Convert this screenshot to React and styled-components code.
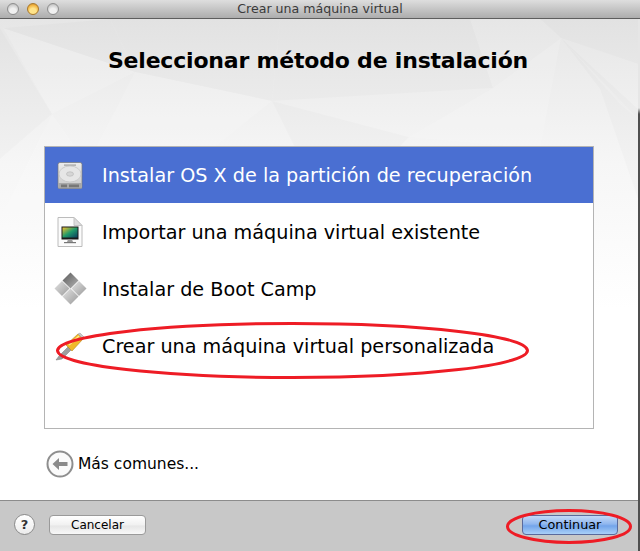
import React from "react";
import styled, { createGlobalStyle } from "styled-components";

const Global = createGlobalStyle`
  html, body { margin: 0; padding: 0; background: #fff; }
  body { font-family: "DejaVu Sans", "Liberation Sans", sans-serif; }
`;

const Frame = styled.div`
  position: relative;
  width: 640px;
  height: 551px;
  overflow: hidden;
  background: linear-gradient(#e6e6e6 0 108px, #4f4f4f 114px);
  padding-right: 2px;
  box-sizing: border-box;
  display: flex;
  flex-direction: column;
`;

const TitleBar = styled.header`
  height: 19px;
  flex: none;
  box-sizing: border-box;
  border-bottom: 1px solid #5e5e5e;
  background: linear-gradient(#dedede, #adadad);
  display: flex;
  align-items: center;
  padding-left: 7px;
  position: relative;
  margin-right: -2px;
`;

const Lights = styled.div`
  display: flex;
  gap: 8px;
`;

const Light = styled.span`
  width: 12px;
  height: 12px;
  border-radius: 50%;
  box-sizing: border-box;
  border: 1px solid ${(p) => (p.$on ? "#a9782a" : "#8e8e8e")};
  background: ${(p) =>
    p.$on
      ? "radial-gradient(circle at 50% 75%, #ffe48a 0 35%, #f2b33f 70%, #b9812d 100%)"
      : "radial-gradient(circle at 50% 75%, #f0f0f0 0 35%, #cfcfcf 70%, #a8a8a8 100%)"};
`;

const WindowTitle = styled.div`
  position: absolute;
  left: 0;
  right: 0;
  top: 0;
  line-height: 17px;
  text-align: center;
  font-size: 12.6px;
  color: #3a3a3a;
`;

const Content = styled.main`
  position: relative;
  flex: 1;
  background: #fff;
  overflow: hidden;
  display: flex;
  flex-direction: column;
  padding-left: 44px;
`;

const Backdrop = styled.svg`
  position: absolute;
  left: 0;
  top: 0;
  width: 638px;
  height: 482px;
`;

const Heading = styled.h1`
  position: relative;
  margin: 0 0 0 -44px;
  height: 127px;
  padding-top: 26px;
  box-sizing: border-box;
  font-size: 22px;
  letter-spacing: -0.2px;
  line-height: 32px;
  font-weight: 700;
  color: #000;
  text-align: center;
  width: 636px;
`;

const List = styled.ul`
  position: relative;
  list-style: none;
  margin: 0;
  padding: 0;
  width: 550px;
  height: 283px;
  box-sizing: border-box;
  border: 1px solid #b4b4b4;
  background: #fff;
`;

const Row = styled.li`
  height: ${(p) => (p.$selected ? 56 : 57)}px;
  display: flex;
  align-items: center;
  background: ${(p) => (p.$selected ? "#4a6fd2" : "transparent")};
  color: ${(p) => (p.$selected ? "#fff" : "#000")};
  font-size: 19.2px;
  padding-left: 6px;
  gap: 13px;
`;

const RowLabel = styled.span`
  margin-top: ${(p) => (p.$selected ? 0 : 2)}px;
`;

const IconSlot = styled.span`
  width: 38px;
  height: 38px;
  flex: none;
  display: flex;
  align-items: center;
  justify-content: center;
`;

const Back = styled.div`
  position: relative;
  display: flex;
  align-items: center;
  gap: 4px;
  margin: 20px 0 0 2px;
  font-size: 15.5px;
  color: #000;
  height: 30px;
`;

const Footer = styled.footer`
  position: absolute;
  left: 0;
  right: 0;
  bottom: 0;
  height: 51px;
  box-sizing: border-box;
  border-top: 1px solid #8c8c8c;
  background: #c8c8c8;
  display: flex;
  align-items: center;
  padding: 0 20px 3px 14px;
`;

const Help = styled.span`
  width: 21px;
  height: 21px;
  box-sizing: border-box;
  border-radius: 50%;
  border: 1px solid #8a8a8a;
  background: linear-gradient(#fff, #ececec);
  font-size: 13px;
  font-weight: 700;
  color: #333;
  display: flex;
  align-items: center;
  justify-content: center;
  margin-right: 14px;
`;

const Button = styled.button`
  height: 20px;
  padding: 0;
  box-sizing: border-box;
  width: ${(p) => p.$w}px;
  font-family: inherit;
  font-size: ${(p) => (p.$primary ? 12.8 : 12)}px;
  color: #000;
  border-radius: 4px;
  border: 1px solid ${(p) => (p.$primary ? "#5a6a9c" : "#9a9a9a")};
  background: ${(p) =>
    p.$primary
      ? "linear-gradient(#c3d9f7 0%, #8fb6ee 45%, #73a4ea 55%, #a9d0f8 100%)"
      : "linear-gradient(#ffffff, #f1f1f1 50%, #e6e6e6 55%, #f8f8f8)"};
  margin-left: ${(p) => (p.$push ? "auto" : "0")};
`;

const Markup = styled.svg`
  position: absolute;
  left: 0;
  top: 0;
  width: 640px;
  height: 551px;
  pointer-events: none;
`;

const Disk = () => (
  <svg width="26" height="27" viewBox="0 0 26 27">
    <defs>
      <linearGradient id="dk" x1="0" y1="0" x2="0" y2="1">
        <stop offset="0" stopColor="#ececec" />
        <stop offset="1" stopColor="#c9c9c9" />
      </linearGradient>
    </defs>
    <path d="M3 .5h20a2 2 0 0 1 2 2V25a1.500 1.500 0 0 1-1.500 1.500h-21A1.500 1.500 0 0 1 1 25V2.500a2 2 0 0 1 2-2z" fill="url(#dk)" stroke="#777" strokeWidth=".7" />
    <rect x="7" y="2.500" width="12" height="1.200" fill="#a0a0a0" />
    <ellipse cx="13" cy="12" rx="11" ry="8" fill="#e6e6e6" stroke="#c0c0c0" strokeWidth=".7" />
    <ellipse cx="13" cy="12" rx="3.500" ry="2.200" fill="#d6d6d6" stroke="#b4b4b4" strokeWidth=".6" />
    <rect x="1.300" y="21" width="23.400" height="5.300" fill="#a8a8a8" />
    <path d="M4 22.500h6v2.800H4zM12 22.500h10v2.800H12z" fill="#777" />
  </svg>
);

const VmFile = () => (
  <svg width="26" height="32" viewBox="0 0 26 32">
    <defs>
      <linearGradient id="sc" x1="0" y1="0" x2="1" y2="1">
        <stop offset="0" stopColor="#f0c030" />
        <stop offset=".5" stopColor="#1f9a6a" />
        <stop offset="1" stopColor="#0d3f5f" />
      </linearGradient>
    </defs>
    <path d="M1 1.500h16l8 8v21h-24z" fill="#fbfbfb" stroke="#bcbcbc" />
    <path d="M17 1.500v8h8z" fill="#dcdcdc" stroke="#c4c4c4" />
    <rect x="4.500" y="10.500" width="17" height="13" fill="#1a1a1a" />
    <rect x="5.500" y="11.500" width="15" height="10" fill="url(#sc)" />
    <path d="M11 23.500h4l1 2.500h-6z" fill="#9a9a9a" />
    <rect x="7" y="26" width="12" height="1.200" fill="#777" />
  </svg>
);

const Diamonds = () => (
  <svg width="33" height="33" viewBox="0 0 33 33">
    <defs>
      <linearGradient id="d1" x1="0" y1="0" x2="1" y2="1">
        <stop offset="0" stopColor="#5a5a5a" />
        <stop offset="1" stopColor="#b4b4b4" />
      </linearGradient>
      <linearGradient id="d2" x1="0" y1="0" x2="1" y2="1">
        <stop offset="0" stopColor="#e4e4e4" />
        <stop offset="1" stopColor="#9a9a9a" />
      </linearGradient>
    </defs>
    <path d="M16.500 .5l8 8-8 8-8-8z" fill="url(#d1)" />
    <path d="M8 9l7.500 7.500L8 24 .5 16.500z" fill="url(#d2)" />
    <path d="M25 9l7.500 7.500L25 24l-7.500-7.500z" fill="url(#d2)" />
    <path d="M16.500 16.500l8 8-8 8-8-8z" fill="url(#d2)" />
  </svg>
);

const Screwdriver = () => (
  <svg width="30" height="30" viewBox="0 0 30 30">
    <path d="M1 29l3-4 9-9 3 3-9 9z" fill="#9e9e9e" stroke="#777" strokeWidth=".5" />
    <path d="M11 14L23 3l5 5-11 12z" fill="#f0b92a" stroke="#b58a1e" strokeWidth=".6" />
    <path d="M23 3l2-1 4 4-1 2z" fill="#c8c8c8" stroke="#999" strokeWidth=".5" />
    <path d="M14 14l10-9" stroke="#ffe98f" strokeWidth="1.500" fill="none" />
  </svg>
);

const BackArrow = () => (
  <svg width="28" height="28" viewBox="0 0 28 28">
    <circle cx="14" cy="14" r="12.500" fill="#fafafa" stroke="#8e8e8e" strokeWidth="2" />
    <path d="M6.500 14l6.500-6v4h8.500v4H13v4z" fill="#8a8a8a" />
  </svg>
);

const rows = [
  { label: "Instalar OS X de la partición de recuperación", icon: <Disk />, selected: true },
  { label: "Importar una máquina virtual existente", icon: <VmFile /> },
  { label: "Instalar de Boot Camp", icon: <Diamonds /> },
  { label: "Crear una máquina virtual personalizada", icon: <Screwdriver /> },
];

/* Faint facets, in window coordinates less the 19px title bar */
const darker = [
  "3,9 110,0 135,53",
  "135,53 110,0 280,0 272,82",
  "272,82 280,0 470,0 493,69",
  "561,19 540,0 638,0 638,45",
  "0,9 52,95 0,140",
  "272,82 409,118 330,200",
  "561,19 638,90 638,180 600,70",
];

const lighter = [
  "3,9 135,53 52,95",
  "135,53 272,82 125,200 90,140",
  "409,118 493,69 561,19 540,130",
  "561,19 638,100 620,85",
  "52,95 125,200 0,200",
];

export default function App() {
  return (
    <Frame>
      <Global />
      <TitleBar>
        <Lights>
          <Light />
          <Light $on />
          <Light />
        </Lights>
        <WindowTitle>Crear una máquina virtual</WindowTitle>
      </TitleBar>
      <Content>
        <Backdrop viewBox="0 0 638 482" aria-hidden="true">
          <defs>
            <linearGradient id="base" x1="0" y1="0" x2="0" y2="1">
              <stop offset="0" stopColor="#e6e6e6" />
              <stop offset=".3" stopColor="#f6f6f6" />
              <stop offset=".6" stopColor="#ffffff" />
            </linearGradient>
          </defs>
          <rect width="638" height="482" fill="url(#base)" />
          {darker.map((points) => (
            <polygon key={points} points={points} fill="#000" fillOpacity=".015" />
          ))}
          {lighter.map((points) => (
            <polygon key={points} points={points} fill="#fff" fillOpacity=".14" />
          ))}
        </Backdrop>
        <Heading>Seleccionar método de instalación</Heading>
        <List>
          {rows.map((r) => (
            <Row key={r.label} $selected={r.selected}>
              <IconSlot>{r.icon}</IconSlot>
              <RowLabel $selected={r.selected}>{r.label}</RowLabel>
            </Row>
          ))}
        </List>
        <Back>
          <BackArrow />
          <span>Más comunes...</span>
        </Back>
        <Footer>
          <Help>?</Help>
          <Button $w={97}>Cancelar</Button>
          <Button $primary $push $w={96}>Continuar</Button>
        </Footer>
      </Content>
      <Markup viewBox="0 0 640 551" aria-hidden="true">
        <ellipse cx="292.500" cy="350.500" rx="235" ry="27" fill="none" stroke="#ee1c25" strokeWidth="3" />
        <ellipse cx="569" cy="526.500" rx="61.500" ry="16" fill="none" stroke="#ee1c25" strokeWidth="3" />
      </Markup>
    </Frame>
  );
}
